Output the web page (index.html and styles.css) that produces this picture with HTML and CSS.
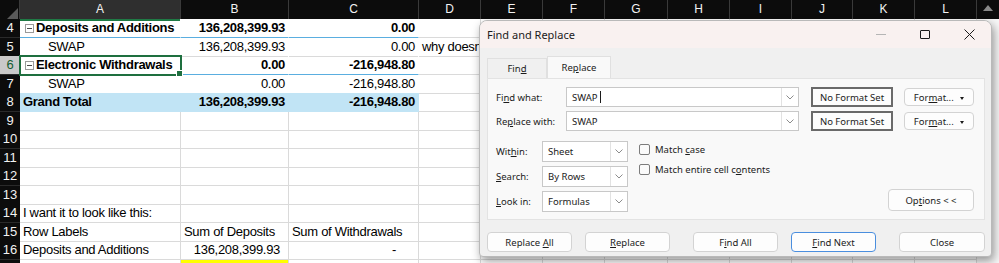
FILE: index.html
```html
<!DOCTYPE html>
<html lang="en">
<head>
    <meta charset="UTF-8">
    <title>Find and Replace</title>
    <link rel="stylesheet" href="styles.css">
</head>
<body>
    <div class="sheet">
        <div class="row head">
            <div class="corner"><span class="all"></span></div>
            <div class="h hsel">A</div>
            <div class="h">B</div>
            <div class="h">C</div>
            <div class="h">D</div>
            <div class="h">E</div>
            <div class="h">F</div>
            <div class="h">G</div>
            <div class="h">H</div>
            <div class="h">I</div>
            <div class="h">J</div>
            <div class="h">K</div>
            <div class="h">L</div>
            <div class="scroll-top"><span class="up"></span></div>
        </div>

        <div class="row">
            <div class="rn">4</div>
            <div class="c pv pl b tg"><span class="tog"></span>Deposits and Additions</div>
            <div class="c pv pl b r">136,208,399.93</div>
            <div class="c pv pl b r">0.00</div>
            <div class="c"></div><div class="c"></div><div class="c"></div><div class="c"></div><div class="c"></div><div class="c"></div><div class="c"></div><div class="c"></div><div class="c"></div>
            <div class="track"></div>
        </div>
        <div class="row">
            <div class="rn">5</div>
            <div class="c pv ind">SWAP</div>
            <div class="c pv r">136,208,399.93</div>
            <div class="c pv r">0.00</div>
            <div class="c spill">why doesn't</div><div class="c"></div><div class="c"></div><div class="c"></div><div class="c"></div><div class="c"></div><div class="c"></div><div class="c"></div><div class="c"></div>
            <div class="track"></div>
        </div>
        <div class="row">
            <div class="rn rsel">6</div>
            <div class="c pv pl b tg active">
                <span class="tog"></span>Electronic Withdrawals
            </div>
            <div class="c pv pl b r">0.00</div>
            <div class="c pv pl b r">-216,948.80</div>
            <div class="c"></div><div class="c"></div><div class="c"></div><div class="c"></div><div class="c"></div><div class="c"></div><div class="c"></div><div class="c"></div><div class="c"></div>
            <div class="track"></div>
        </div>
        <div class="row">
            <div class="rn">7</div>
            <div class="c pv pl ind">SWAP</div>
            <div class="c pv pl r">0.00</div>
            <div class="c pv pl r">-216,948.80</div>
            <div class="c"></div><div class="c"></div><div class="c"></div><div class="c"></div><div class="c"></div><div class="c"></div><div class="c"></div><div class="c"></div><div class="c"></div>
            <div class="track"></div>
        </div>
        <div class="row">
            <div class="rn">8</div>
            <div class="c gt b">Grand Total</div>
            <div class="c gt b r">136,208,399.93</div>
            <div class="c gt b r">-216,948.80</div>
            <div class="c"></div><div class="c"></div><div class="c"></div><div class="c"></div><div class="c"></div><div class="c"></div><div class="c"></div><div class="c"></div><div class="c"></div>
            <div class="track"></div>
        </div>
        <div class="row">
            <div class="rn">9</div>
            <div class="c"></div><div class="c"></div><div class="c"></div><div class="c"></div><div class="c"></div><div class="c"></div><div class="c"></div><div class="c"></div><div class="c"></div><div class="c"></div><div class="c"></div><div class="c"></div>
            <div class="track"></div>
        </div>
        <div class="row">
            <div class="rn">10</div>
            <div class="c"></div><div class="c"></div><div class="c"></div><div class="c"></div><div class="c"></div><div class="c"></div><div class="c"></div><div class="c"></div><div class="c"></div><div class="c"></div><div class="c"></div><div class="c"></div>
            <div class="track"></div>
        </div>
        <div class="row">
            <div class="rn">11</div>
            <div class="c"></div><div class="c"></div><div class="c"></div><div class="c"></div><div class="c"></div><div class="c"></div><div class="c"></div><div class="c"></div><div class="c"></div><div class="c"></div><div class="c"></div><div class="c"></div>
            <div class="track"></div>
        </div>
        <div class="row">
            <div class="rn">12</div>
            <div class="c"></div><div class="c"></div><div class="c"></div><div class="c"></div><div class="c"></div><div class="c"></div><div class="c"></div><div class="c"></div><div class="c"></div><div class="c"></div><div class="c"></div><div class="c"></div>
            <div class="track"></div>
        </div>
        <div class="row">
            <div class="rn">13</div>
            <div class="c"></div><div class="c"></div><div class="c"></div><div class="c"></div><div class="c"></div><div class="c"></div><div class="c"></div><div class="c"></div><div class="c"></div><div class="c"></div><div class="c"></div><div class="c"></div>
            <div class="track"></div>
        </div>
        <div class="row">
            <div class="rn">14</div>
            <div class="c">I want it to look like this:</div>
            <div class="c"></div><div class="c"></div><div class="c"></div><div class="c"></div><div class="c"></div><div class="c"></div><div class="c"></div><div class="c"></div><div class="c"></div><div class="c"></div><div class="c"></div>
            <div class="track"></div>
        </div>
        <div class="row">
            <div class="rn">15</div>
            <div class="c">Row Labels</div>
            <div class="c">Sum of Deposits</div>
            <div class="c">Sum of Withdrawals</div>
            <div class="c"></div><div class="c"></div><div class="c"></div><div class="c"></div><div class="c"></div><div class="c"></div><div class="c"></div><div class="c"></div><div class="c"></div>
            <div class="track"></div>
        </div>
        <div class="row">
            <div class="rn">16</div>
            <div class="c">Deposits and Additions</div>
            <div class="c r acc">136,208,399.93</div>
            <div class="c r dash">-</div>
            <div class="c"></div><div class="c"></div><div class="c"></div><div class="c"></div><div class="c"></div><div class="c"></div><div class="c"></div><div class="c"></div><div class="c"></div>
            <div class="track"></div>
        </div>
        <div class="row">
            <div class="rn"></div>
            <div class="c"></div>
            <div class="c hl"></div>
            <div class="c"></div><div class="c"></div><div class="c"></div><div class="c"></div><div class="c"></div><div class="c"></div><div class="c"></div><div class="c"></div><div class="c"></div><div class="c"></div>
            <div class="track"></div>
        </div>
    </div>

    <div class="dialog">
        <div class="titlebar">
            <span class="title">Find and Replace</span>
            <div class="caption-btns">
                <span class="cap"><i class="min"></i></span>
                <span class="cap"><i class="max"></i></span>
                <span class="cap">
                    <svg width="11" height="11" viewBox="0 0 11 11"><path d="M0.5 0.5 L10.5 10.5 M10.5 0.5 L0.5 10.5" stroke="#1b1b1b" stroke-width="1" fill="none"/></svg>
                </span>
            </div>
        </div>
        <div class="dlg-body">
            <div class="tabs">
                <span class="tab">Fin<u>d</u></span>
                <span class="tab on">Re<u>p</u>lace</span>
            </div>
            <div class="panel">
                <div class="frow">
                    <label class="flabel">Fi<u>n</u>d what:</label>
                    <div class="combo">
                        <span class="val">SWAP <i class="caret"></i></span>
                        <span class="drop"><svg width="8" height="5" viewBox="0 0 8 5"><polyline points="0.5,0.5 4,4 7.5,0.5" stroke="#8c8c8c" fill="none"/></svg></span>
                    </div>
                    <div class="nofmt">No Format Set</div>
                    <button class="btn fmt">For<u>m</u>at... <span class="tri"></span></button>
                </div>
                <div class="frow">
                    <label class="flabel">Re<u>p</u>lace with:</label>
                    <div class="combo">
                        <span class="val">SWAP</span>
                        <span class="drop"><svg width="8" height="5" viewBox="0 0 8 5"><polyline points="0.5,0.5 4,4 7.5,0.5" stroke="#8c8c8c" fill="none"/></svg></span>
                    </div>
                    <div class="nofmt">No Format Set</div>
                    <button class="btn fmt">For<u>m</u>at... <span class="tri"></span></button>
                </div>
                <div class="opts">
                    <div class="selects">
                        <div class="srow">
                            <label>Wit<u>h</u>in:</label>
                            <div class="combo sm">
                                <span class="val">Sheet</span>
                                <span class="drop"><svg width="8" height="5" viewBox="0 0 8 5"><polyline points="0.5,0.5 4,4 7.5,0.5" stroke="#8c8c8c" fill="none"/></svg></span>
                            </div>
                        </div>
                        <div class="srow">
                            <label><u>S</u>earch:</label>
                            <div class="combo sm">
                                <span class="val">By Rows</span>
                                <span class="drop"><svg width="8" height="5" viewBox="0 0 8 5"><polyline points="0.5,0.5 4,4 7.5,0.5" stroke="#8c8c8c" fill="none"/></svg></span>
                            </div>
                        </div>
                        <div class="srow">
                            <label><u>L</u>ook in:</label>
                            <div class="combo sm">
                                <span class="val">Formulas</span>
                                <span class="drop"><svg width="8" height="5" viewBox="0 0 8 5"><polyline points="0.5,0.5 4,4 7.5,0.5" stroke="#8c8c8c" fill="none"/></svg></span>
                            </div>
                        </div>
                    </div>
                    <div class="checks">
                        <label class="chk"><span class="box"></span><span>Match <u>c</u>ase</span></label>
                        <label class="chk"><span class="box"></span><span>Match entire cell c<u>o</u>ntents</span></label>
                    </div>
                    <button class="btn options">Op<u>t</u>ions &lt; &lt;</button>
                </div>
            </div>
            <div class="actions">
                <div class="grp">
                    <button class="btn">Replace <u>A</u>ll</button>
                    <button class="btn"><u>R</u>eplace</button>
                </div>
                <div class="grp">
                    <button class="btn">F<u>i</u>nd All</button>
                    <button class="btn default"><u>F</u>ind Next</button>
                </div>
                <button class="btn close">Close</button>
            </div>
        </div>
    </div>
</body>
</html>
```

FILE: styles.css
```css
* {
    box-sizing: border-box;
}
body {
    margin: 0;
    height: 263px;
    font-family: "Liberation Sans", Arial, sans-serif;
    background-color: white;
    overflow: hidden;
}
.sheet {
    width: 999px;
    height: 263px;
    overflow: hidden;
}
.row {
    display: grid;
    grid-template-columns: 20px 161px 108px 130px 62px 62px 62px 63px 62px 62px 61px 62px 62px 22px;
    height: 18.5px;
}

/* column headers */
.head {
    height: 19px;
    background-color: #0c0c0c;
}
.corner {
    display: flex;
    align-items: flex-end;
    justify-content: flex-end;
    padding: 0 1px 2px 0;
    border-right: 1px solid #3a3a3a;
}
.all {
    width: 0;
    height: 0;
    border-left: 11px solid transparent;
    border-bottom: 11px solid #5a5a5a;
}
.h {
    color: #f2f2f2;
    font-size: 12px;
    text-align: center;
    line-height: 19px;
    border-right: 1px solid #3a3a3a;
}
.hsel {
    background-color: #2f2f2f;
    border-bottom: 2px solid #1f7a45;
}
.scroll-top {
    display: flex;
    justify-content: center;
    padding-top: 5px;
}
.up {
    width: 0;
    height: 0;
    border-left: 5px solid transparent;
    border-right: 5px solid transparent;
    border-bottom: 6px solid #8a8a8a;
}

/* row numbers */
.rn {
    background-color: #0c0c0c;
    color: #f2f2f2;
    font-size: 13px;
    text-align: center;
    line-height: 18px;
    border-bottom: 1px solid #2a2a2a;
}
.rsel {
    background-color: #c9c9c9;
    color: #145c30;
}
.track {
    background-color: #f7f7f7;
}

/* cells */
.c {
    border-right: 1px solid #dadada;
    border-bottom: 1px solid #dadada;
    padding: 0 3px;
    font-size: 13px;
    letter-spacing: -0.3px;
    line-height: 18px;
    white-space: nowrap;
    overflow: hidden;
    color: #000;
}
.r {
    text-align: right;
}
.b {
    font-weight: bold;
}
.pv {
    border-right-color: white;
}
.pl {
    border-bottom-color: #5aaee0;
}
.gt {
    background-color: #c1e4f5;
    border-right-color: #c1e4f5;
    border-bottom-color: #c1e4f5;
}
.ind {
    padding-left: 28px;
}
.tg {
    padding-left: 5px;
}
.tog {
    display: inline-block;
    width: 9px;
    height: 9px;
    margin-right: 2px;
    vertical-align: -1px;
    border: 1px solid #9a9a9a;
    background: linear-gradient(#4a4a4a, #4a4a4a) center / 5px 1px no-repeat;
}
.active {
    position: relative;
    overflow: visible;
    outline: 2px solid #1e6f3f;
    outline-offset: -1px;
}
.active::after {
    content: "";
    position: absolute;
    right: -3px;
    bottom: -3px;
    width: 5px;
    height: 5px;
    background-color: #1e6f3f;
    border: 1px solid white;
}
.spill {
    overflow: visible;
}
.acc {
    padding-right: 8px;
}
.dash {
    padding-right: 22px;
}
.hl {
    background-color: #ffff00;
}

/* find and replace dialog */
.dialog {
    position: absolute;
    left: 479px;
    top: 20px;
    width: 513px;
    height: 237px;
    background-color: #f0f0f0;
    border: 1px solid #b9b9b9;
    border-radius: 8px 8px 4px 4px;
    box-shadow: 2px 4px 10px rgba(0, 0, 0, 0.4);
    font-family: "Noto Sans", sans-serif;
    font-size: 9.5px;
    color: #1b1b1b;
    overflow: hidden;
}
.titlebar {
    height: 27px;
    background-color: #f9f1f0;
    display: flex;
    align-items: center;
    padding-left: 7px;
}
.title {
    font-size: 11px;
}
.caption-btns {
    margin-left: auto;
    display: flex;
}
.cap {
    width: 44px;
    height: 27px;
    display: flex;
    align-items: center;
    justify-content: center;
}
.min {
    width: 10px;
    height: 1px;
    background-color: #b5b5b5;
}
.max {
    width: 10px;
    height: 9px;
    border: 1px solid #1b1b1b;
    border-radius: 1px;
}
.dlg-body {
    padding: 8px 6px 0 7px;
}
u {
    text-decoration-thickness: 1px;
    text-underline-offset: 1px;
}
.tabs {
    display: flex;
    align-items: flex-end;
    height: 22px;
}
.tab {
    width: 60px;
    height: 20px;
    display: flex;
    align-items: center;
    justify-content: center;
    border: 1px solid #e0e0e0;
    border-bottom: none;
    background-color: #f0f0f0;
}
.tab.on {
    width: 64px;
    height: 22px;
    background-color: #f9f9f9;
}
.panel {
    height: 142px;
    background-color: #f9f9f9;
    border: 1px solid #e3e3e3;
    padding: 8px 10px 0 8px;
}
.frow {
    display: flex;
    align-items: center;
    height: 20px;
}
.frow + .frow {
    margin-top: 4px;
}
.flabel {
    width: 70px;
}
.combo {
    width: 233px;
    height: 20px;
    background-color: white;
    border: 1px solid #c8c8c8;
    display: flex;
    align-items: center;
}
.combo .val {
    flex: 1;
    padding-left: 5px;
}
.caret {
    display: inline-block;
    width: 1px;
    height: 12px;
    background-color: #1b1b1b;
    vertical-align: -2px;
}
.drop {
    width: 17px;
    height: 100%;
    border-left: 1px solid #e2e2e2;
    display: flex;
    align-items: center;
    justify-content: center;
}
.nofmt {
    margin-left: 12px;
    width: 82px;
    height: 20px;
    border: 2px solid #6a6a6a;
    background-color: #fdfdfd;
    display: flex;
    align-items: center;
    justify-content: center;
}
.btn {
    font: inherit;
    color: inherit;
    background-color: #fdfdfd;
    border: 1px solid #d3d3d3;
    border-radius: 4px;
    padding: 0;
}
.fmt {
    margin-left: auto;
    width: 70px;
    height: 18px;
}
.tri {
    display: inline-block;
    margin-left: 4px;
    vertical-align: 1px;
    border-left: 2.5px solid transparent;
    border-right: 2.5px solid transparent;
    border-top: 3px solid #1b1b1b;
}
.opts {
    display: flex;
    margin-top: 10px;
}
.selects {
    display: flex;
    flex-direction: column;
    gap: 4px;
}
.srow {
    display: flex;
    align-items: center;
}
.srow label {
    width: 46px;
}
.combo.sm {
    width: 86px;
    height: 21px;
}
.checks {
    margin-left: 11px;
    padding-top: 2px;
    display: flex;
    flex-direction: column;
    gap: 8px;
}
.chk {
    display: flex;
    align-items: center;
    height: 12px;
}
.box {
    width: 11px;
    height: 11px;
    margin-right: 5px;
    border: 1px solid #7c7c7c;
    border-radius: 2px;
    background-color: #fbfbfb;
}
.options {
    margin-left: auto;
    align-self: flex-end;
    width: 86px;
    height: 22px;
    margin-bottom: 1px;
}
.actions {
    display: flex;
    justify-content: space-between;
    margin-top: 12px;
}
.grp {
    display: flex;
    gap: 13px;
}
.actions .btn {
    width: 85px;
    height: 20px;
}
.actions .close {
    width: 86px;
}
.default {
    border-color: #4a8ede;
}
```
